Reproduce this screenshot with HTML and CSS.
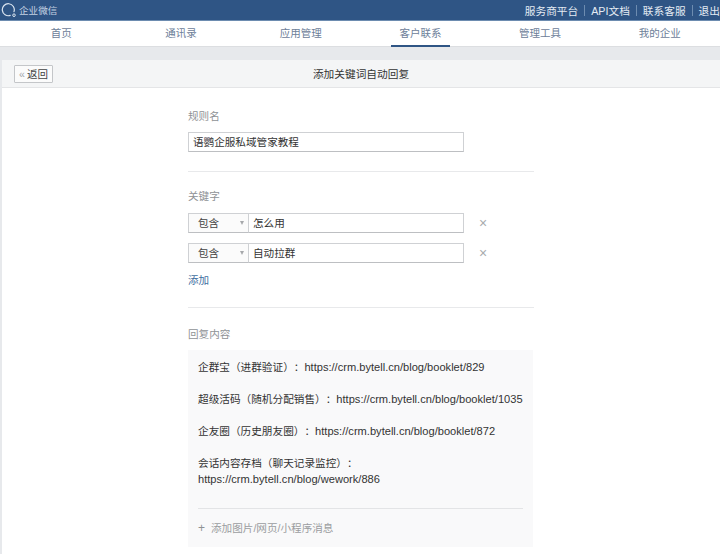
FILE: index.html
```html
<!DOCTYPE html>
<html lang="zh">
<head>
<meta charset="utf-8">
<title>添加关键词自动回复</title>
<link rel="stylesheet" href="styles.css">
</head>
<body>
<header class="topbar">
  <div class="brand">
    <svg class="logo" width="16" height="15" viewBox="0 0 16 15"><path d="M9.2 12.4A6 6 0 1 1 13 8.6" fill="none" stroke="#dbe5f0" stroke-width="1.2" stroke-linecap="round"/><circle cx="13" cy="12.2" r="1.3" fill="none" stroke="#dbe5f0" stroke-width="1"/></svg>
    <span>企业微信</span>
  </div>
  <nav class="toplinks">
    <a>服务商平台</a><i></i><a>API文档</a><i></i><a>联系客服</a><i></i><a>退出</a>
  </nav>
</header>
<nav class="tabs">
  <a class="tab">首页</a>
  <a class="tab">通讯录</a>
  <a class="tab">应用管理</a>
  <a class="tab active">客户联系</a>
  <a class="tab">管理工具</a>
  <a class="tab">我的企业</a>
</nav>
<main class="panel">
  <div class="panel-head">
    <button class="back"><span class="chev">«</span>返回</button>
    <h1>添加关键词自动回复</h1>
  </div>
  <div class="form">
    <section class="sec sec-name">
      <div class="label">规则名</div>
      <div class="input name">语鹦企服私域管家教程</div>
    </section>
    <section class="sec sec-key">
      <div class="label">关键字</div>
      <div class="kw">
        <div class="select">包含<span class="caret"></span></div>
        <div class="input kwi">怎么用</div>
        <span class="x">×</span>
      </div>
      <div class="kw">
        <div class="select">包含<span class="caret"></span></div>
        <div class="input kwi">自动拉群</div>
        <span class="x">×</span>
      </div>
      <a class="add">添加</a>
    </section>
    <section class="sec-reply">
      <div class="label">回复内容</div>
      <div class="reply">
        <div class="msg">
          <p>企群宝（进群验证）：<span class="url">https://crm.bytell.cn/blog/booklet/829</span></p>
          <p>超级活码（随机分配销售）：<span class="url">https://crm.bytell.cn/blog/booklet/1035</span></p>
          <p>企友圈（历史朋友圈）：<span class="url">https://crm.bytell.cn/blog/booklet/872</span></p>
          <p>会话内容存档（聊天记录监控）：<br><span class="url">https://crm.bytell.cn/blog/wework/886</span></p>
        </div>
        <div class="attach"><span class="plus">+</span>添加图片/网页/小程序消息</div>
      </div>
    </section>
  </div>
</main>
</body>
</html>
```
FILE: styles.css
```css
* { box-sizing: border-box; }
html, body { margin: 0; padding: 0; }
body {
  width: 720px; height: 554px; overflow: hidden;
  background: #e7e9ec;
  font-family: "Liberation Sans", "Noto Sans CJK SC", sans-serif;
  font-size: 11px; color: #3a3a3a;
  text-spacing-trim: space-all;
}
.topbar {
  height: 21px; background: #2f5585; border-bottom: 1px solid #6d8cb0;
  display: flex; justify-content: space-between; align-items: center;
  color: #e4ebf3;
}
.brand { display: flex; align-items: center; gap: 2px; padding-left: 1px; font-size: 9.6px; color: #c4d2e2; }
.logo { display: block; }
.toplinks { display: flex; align-items: center; font-size: 10.7px; }
.toplinks i { width: 1px; height: 11px; background: #6d8cb0; margin: 0 6px; }
.tabs {
  height: 26px; background: #fff; display: flex; border-bottom: 1px solid #dcdee1; padding-left: 1.5px;
}
.tab {
  width: 119.7px; text-align: center; color: #6d8099; font-size: 10.5px; line-height: 24px; position: relative;
}
.tab.active::after {
  content: ""; position: absolute; left: 30px; width: 59px; bottom: -1px; height: 2px; background: #2f5585;
}
.panel { margin: 13px 0 0 2px; background: #fff; height: 494px; }
.panel-head {
  height: 28px; background: #f4f5f6; border-bottom: 1px solid #e4e5e7;
  display: flex; align-items: center; justify-content: center; position: relative;
}
.panel-head h1 { margin: 0; font-size: 10.7px; font-weight: normal; color: #333; }
.back {
  position: absolute; left: 12px; top: 5px; width: 39px; height: 18px; padding: 0;
  background: #fbfbfb; border: 1px solid #c4c6c9; border-radius: 1px;
  font: inherit; font-size: 10.5px; color: #444; line-height: 15px;
}
.chev { color: #a2a6ab; margin-right: 2px; }
.form { width: 346px; margin-left: 186px; padding-top: 21px; }
.label { font-size: 10.6px; color: #8f9296; line-height: 14px; }
.sec { border-bottom: 1px solid #e8e9eb; }
.sec-name { height: 63px; }
.sec-key { height: 136px; padding-top: 17px; }
.input {
  background: #fff; border: 1px solid #cfd1d4; border-bottom-color: #bdbfc2;
  height: 20px; line-height: 18px; padding-left: 4px; font-size: 10.6px; color: #333;
}
.name { width: 276px; margin-top: 9px; }
.kw { display: flex; align-items: center; margin-top: 10px; width: 276px; position: relative; }
.kw + .kw { margin-top: 10px; }
.select {
  width: 60px; height: 20px; border: 1px solid #cfd1d4; border-right: none; border-bottom-color: #bdbfc2;
  background: #fbfbfb; padding-left: 9px; line-height: 18px; font-size: 10.6px; color: #444; position: relative;
}
.caret {
  position: absolute; right: 4px; top: 7px; width: 0; height: 0;
  border: 2.5px solid transparent; border-top: 4px solid #a6a8ab; border-bottom: none;
}
.kwi { flex: 1; }
.x { position: absolute; left: 291px; top: 2px; font-size: 14px; line-height: 16px; color: #a9abae; }
.add { display: block; margin-top: 10px; font-size: 10.6px; line-height: 14px; color: #3f6f9f; }
.sec-reply { padding-top: 19px; }
.reply { margin-top: 9px; background: #f9f9fa; width: 345px; height: 197px; padding: 0 10px; }
.msg { height: 159px; border-bottom: 1px solid #e3e4e6; padding-top: 9px; font-size: 10.65px; line-height: 16px; color: #333; }
.msg p { margin: 0 0 16px; }
.url { font-size: 11.1px; }
.attach { padding-top: 12px; font-size: 10.6px; color: #9b9da0; line-height: 14px; }
.plus { margin-right: 6px; font-size: 12px; color: #8f9194; }
```
